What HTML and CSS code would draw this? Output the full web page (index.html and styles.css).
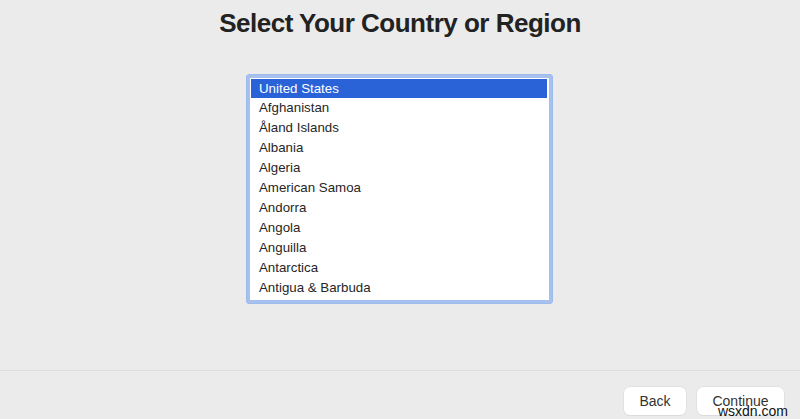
FILE: index.html
```html
<!DOCTYPE html>
<html>
<head>
<meta charset="utf-8">
<link rel="stylesheet" href="styles.css">
</head>
<body>
<div class="page">
  <main class="main">
    <h1 class="title">Select Your Country or Region</h1>
    <div class="listbox">
      <ul class="list">
        <li class="item selected">United States</li>
        <li class="item">Afghanistan</li>
        <li class="item">Åland Islands</li>
        <li class="item">Albania</li>
        <li class="item">Algeria</li>
        <li class="item">American Samoa</li>
        <li class="item">Andorra</li>
        <li class="item">Angola</li>
        <li class="item">Anguilla</li>
        <li class="item">Antarctica</li>
        <li class="item">Antigua &amp; Barbuda</li>
      </ul>
    </div>
  </main>
  <footer class="footer">
    <button class="btn back">Back</button>
    <button class="btn continue">Continue</button>
    <span class="watermark">wsxdn.com</span>
  </footer>
</div>
</body>
</html>
```
FILE: styles.css
```css
* { box-sizing: border-box; }
html, body { margin: 0; padding: 0; }
body {
  background: #ebebeb;
  font-family: "Liberation Sans", Arial, sans-serif;
  color: #222;
  width: 800px;
  height: 419px;
  overflow: hidden;
}
.page {
  display: flex;
  flex-direction: column;
  height: 419px;
}
.main {
  flex: 1;
  display: flex;
  flex-direction: column;
  align-items: center;
  padding-top: 8px;
}
.title {
  margin: 0;
  font-size: 26px;
  font-weight: bold;
  color: #222;
  line-height: 30px;
  letter-spacing: -0.5px;
}
.listbox {
  margin-top: 36px;
  margin-left: -1px;
  width: 307px;
  padding: 3px;
  border: 1px solid #9dbbec;
  background: #a6c1ee;
  border-radius: 3px;
}
.list {
  list-style: none;
  margin: 0;
  padding: 0 2px 0 1px;
  background: #fff;
  height: 222px;
  overflow: hidden;
}
.item {
  height: 20px;
  line-height: 20px;
  font-size: 13.3px;
  padding-left: 8px;
  color: #262626;
}
.item.selected {
  background: #2a63d8;
  color: #fff;
  box-shadow: inset 0 1px 0 #fff;
  line-height: 21px;
}
.footer {
  height: 49px;
  border-top: 1px solid #dedede;
  display: flex;
  justify-content: flex-end;
  align-items: flex-start;
  padding-top: 16px;
  padding-right: 16px;
  gap: 11px;
  position: relative;
}
.btn {
  font-family: "Liberation Sans", Arial, sans-serif;
  font-size: 14px;
  color: #333;
  background: #fff;
  border: none;
  border-radius: 6px;
  height: 28px;
  padding: 0;
  box-shadow: 0 0 0 0.5px #d8d8d8, 0 1px 1px rgba(0,0,0,0.05);
}
.back { width: 62px; }
.continue { width: 87px; }
.watermark {
  position: absolute;
  right: 12px;
  bottom: 0;
  font-size: 14px;
  line-height: 16px;
  color: #111;
}
```
